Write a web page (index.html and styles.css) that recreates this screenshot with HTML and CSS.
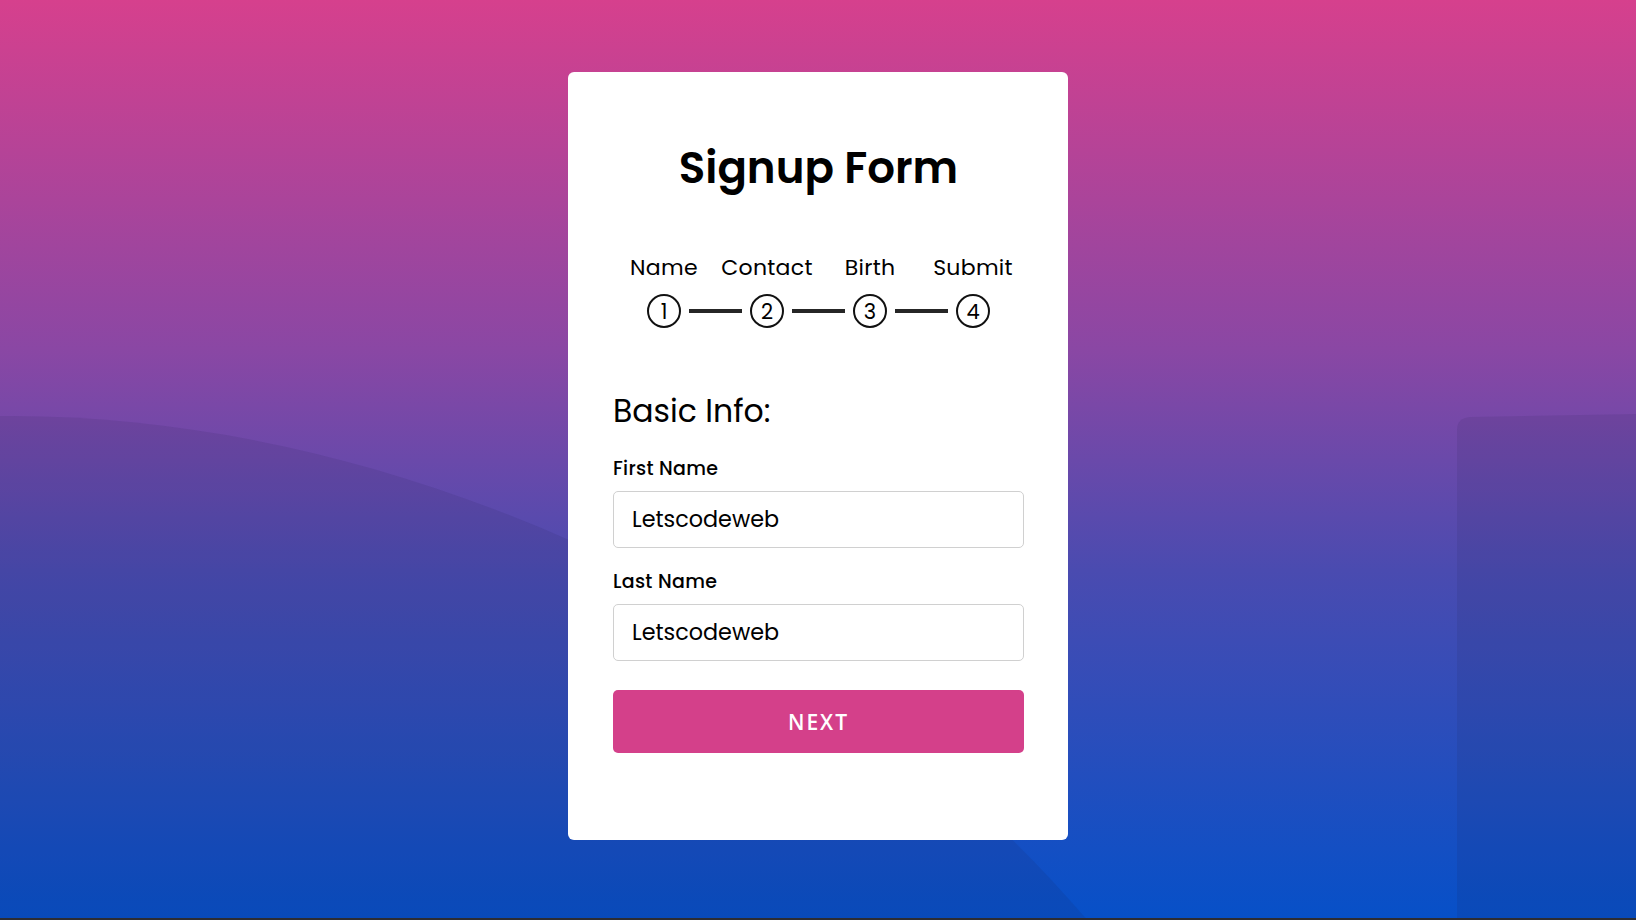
FILE: index.html
```html
<!DOCTYPE html>
<html lang="en">
<head>
<meta charset="utf-8">
<title>Signup Form</title>
<link rel="stylesheet" href="styles.css">
</head>
<body>
<div class="bg-deco">
  <svg class="wave" width="1636" height="920" viewBox="0 0 1636 920" xmlns="http://www.w3.org/2000/svg">
    <path d="M0,416 C380,412 820,600 1100,935 L0,935 Z" fill="rgba(30,30,70,0.10)"/>
    <path d="M1457,430 Q1457,418 1470,417 L1636,414 L1636,920 L1457,920 Z" fill="rgba(30,30,70,0.10)"/>
  </svg>
</div>
<main class="page">
  <section class="card">
    <h1 class="title">Signup Form</h1>
    <div class="progress">
      <div class="labels">
        <span>Name</span>
        <span>Contact</span>
        <span>Birth</span>
        <span>Submit</span>
      </div>
      <div class="steps">
        <span class="circle">1</span>
        <span class="line"></span>
        <span class="circle">2</span>
        <span class="line"></span>
        <span class="circle">3</span>
        <span class="line"></span>
        <span class="circle">4</span>
      </div>
    </div>
    <form class="form">
      <h2 class="section-title">Basic Info:</h2>
      <label class="field">
        <span class="field-label">First Name</span>
        <input class="input" type="text" value="Letscodeweb">
      </label>
      <label class="field">
        <span class="field-label">Last Name</span>
        <input class="input" type="text" value="Letscodeweb">
      </label>
      <button class="btn" type="button">NEXT</button>
    </form>
  </section>
</main>
</body>
</html>
```

FILE: styles.css
```css
* { box-sizing: border-box; }
html, body { margin: 0; padding: 0; }
body {
  width: 1636px;
  height: 920px;
  overflow: hidden;
  position: relative;
  font-family: "Poppins", "Inter", "Noto Sans", sans-serif;
  color: #000;
  background: linear-gradient(to bottom, #d6408d 0%, #8a47a4 38%, #4a4bb0 62%, #0650c8 100%);
  border-bottom: 2px solid #2d2d33;
}
.bg-deco {
  position: absolute;
  inset: 0;
  pointer-events: none;
}
.wave { display: block; }
.page {
  position: relative;
  display: flex;
  justify-content: center;
  padding-top: 72px;
}
.card {
  width: 500px;
  height: 768px;
  background: #fff;
  border-radius: 6px;
  padding: 0 44px 0 45px;
  display: flex;
  flex-direction: column;
}
.title {
  margin: 72px 0 0;
  font-size: 43.5px;
  font-weight: 600;
  line-height: 48px;
  text-align: center;
}
.progress {
  margin-top: 62px;
  display: flex;
  flex-direction: column;
  align-items: center;
}
.labels {
  display: grid;
  grid-template-columns: repeat(4, 103px);
  font-size: 22px;
  line-height: 28px;
  text-align: center;
  letter-spacing: 0.3px;
}
.steps {
  margin-top: 12px;
  display: flex;
  align-items: center;
  gap: 8px;
}
.circle {
  width: 34px;
  height: 34px;
  border: 2px solid #111;
  border-radius: 50%;
  display: flex;
  align-items: center;
  justify-content: center;
  font-size: 21px;
  line-height: 1;
  padding-top: 1px;
}
.line {
  width: 53px;
  height: 4px;
  background: #262626;
}
.form {
  margin-top: 63px;
  display: flex;
  flex-direction: column;
}
.section-title {
  margin: 0;
  font-size: 31.5px;
  font-weight: 400;
  line-height: 40px;
}
.field {
  display: flex;
  flex-direction: column;
  margin-top: 26px;
}
.field + .field { margin-top: 22px; }
.field-label {
  font-size: 19px;
  font-weight: 500;
  line-height: 24px;
  letter-spacing: 0.3px;
}
.input {
  margin-top: 10px;
  height: 57px;
  border: 1px solid #d0d0d0;
  border-radius: 5px;
  padding: 0 18px;
  font-family: inherit;
  font-size: 22.3px;
  color: #000;
  outline: none;
}
.btn {
  margin-top: 29px;
  height: 63px;
  border: none;
  border-radius: 5px;
  background: #d4408a;
  color: #fff;
  font-family: "Open Sans", "Noto Sans", sans-serif;
  font-size: 21px;
  font-weight: 600;
  letter-spacing: 2px;
  cursor: pointer;
}
```
